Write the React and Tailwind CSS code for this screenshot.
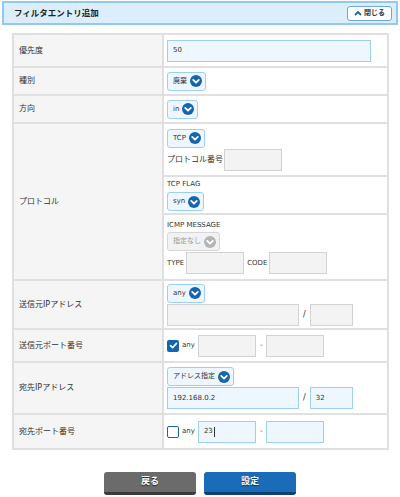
import React from 'react';

const font = { fontFamily: '"DejaVu Sans", "Noto Sans CJK JP", sans-serif' };

const Chevron = ({ gray }) => (
  <svg width="12" height="12" viewBox="0 0 12 12" className="shrink-0">
    <circle cx="6" cy="6" r="6" fill={gray ? '#b5b5b5' : '#1565b0'} />
    <path d="M3.2 4.9 L6 7.7 L8.8 4.9" fill="none" stroke="#fff" strokeWidth="1.8" strokeLinecap="round" strokeLinejoin="round" />
  </svg>
);

const Select = ({ label, gray }) => (
  <div className="flex">
    <div
      className={
        'flex h-[19px] items-center gap-[3px] rounded-[3px] border pl-[5px] pr-[3px] text-[7px] ' +
        (gray ? 'border-[#d6d6d6] bg-[#f2f2f2] text-[#9a9a9a]' : 'border-[#9ccff3] bg-[#eef7ff] text-[#333]')
      }
    >
      <span>{label}</span>
      <Chevron gray={gray} />
    </div>
  </div>
);

const Input = ({ w, value, blue, caret }) => (
  <div
    className={
      'flex h-[22px] shrink-0 items-center border px-[5px] text-[7px] text-[#333] ' +
      (blue ? 'border-[#9ccff3] bg-[#eef7fd]' : 'border-[#d2d2d2] bg-[#f3f3f3]')
    }
    style={{ width: w }}
  >
    {value}
    {caret && <span className="ml-[1px] inline-block h-[10px] w-px bg-[#333]" />}
  </div>
);

const Check = ({ checked }) =>
  checked ? (
    <div className="flex h-[12px] w-[12px] items-center justify-center rounded-[2px] bg-[#1565b0]">
      <svg width="9" height="9" viewBox="0 0 9 9">
        <path d="M1.5 4.6 L3.6 6.6 L7.5 2.4" fill="none" stroke="#fff" strokeWidth="1.6" strokeLinecap="round" strokeLinejoin="round" />
      </svg>
    </div>
  ) : (
    <div className="h-[12px] w-[12px] rounded-[2px] border border-[#1565b0] bg-white" />
  );

const Row = ({ label, h, children, last }) => (
  <div className={'flex ' + (last ? '' : 'border-b-2 border-[#e0e0e0]')} style={{ height: h }}>
    <div className="flex w-[150px] shrink-0 items-center border-r-2 border-[#e0e0e0] bg-[#f5f5f5] pl-[5px] text-[8px] text-[#333]">
      {label}
    </div>
    <div className="flex flex-1 flex-col justify-center pl-[3px]">{children}</div>
  </div>
);

export default function App() {
  return (
    <div className="h-[497px] w-[400px] bg-white pt-px text-[#333]" style={font}>
      <div className="mx-[2px] flex h-[24px] items-center justify-between border-2 border-[#93c9ef] bg-[#dceefc] pl-[10px] pr-[4px]">
        <span className="text-[8.5px] font-bold text-[#222]">フィルタエントリ追加</span>
        <div className="flex h-[15px] w-[45px] items-center justify-center gap-[2px] rounded-[3px] border border-[#6aa8dc] bg-white text-[7px] font-bold text-[#333]">
          <svg width="8" height="6" viewBox="0 0 8 6">
            <path d="M1 5 L4 2 L7 5" fill="none" stroke="#1565b0" strokeWidth="1.8" />
          </svg>
          閉じる
        </div>
      </div>

      <div className="ml-[12px] mt-[8px] w-[377px] border-2 border-[#e0e0e0]">
        <Row label="優先度" h={33}>
          <Input w={204} value="50" blue />
        </Row>
        <Row label="種別" h={28}>
          <Select label="廃棄" />
        </Row>
        <Row label="方向" h={28}>
          <Select label="in" />
        </Row>
        <div className="flex border-b-2 border-[#e0e0e0]" style={{ height: 157 }}>
          <div className="flex w-[150px] shrink-0 items-center border-r-2 border-[#e0e0e0] bg-[#f5f5f5] pl-[5px] text-[8px]">
            プロトコル
          </div>
          <div className="flex flex-1 flex-col">
            <div className="flex h-[53px] flex-col justify-center gap-[1px] border-b-2 border-[#e0e0e0] pl-[3px]">
              <Select label="TCP" />
              <div className="flex items-center gap-[1px] text-[8px]">
                <span>プロトコル番号</span>
                <Input w={58} />
              </div>
            </div>
            <div className="flex h-[38px] flex-col justify-center gap-[2px] border-b-2 border-[#e0e0e0] pl-[3px]">
              <span className="text-[7px] leading-[11px]">TCP FLAG</span>
              <Select label="syn" />
            </div>
            <div className="flex flex-1 flex-col justify-center gap-[1px] pl-[3px]">
              <span className="text-[7px] leading-[11px]">ICMP MESSAGE</span>
              <Select label="指定なし" gray />
              <div className="flex items-center gap-[2px] text-[7px]">
                <span>TYPE</span>
                <Input w={58} />
                <span className="ml-[1px]">CODE</span>
                <Input w={58} />
              </div>
            </div>
          </div>
        </div>
        <Row label="送信元IPアドレス" h={49}>
          <div className="flex flex-col gap-[1px]">
            <Select label="any" />
            <div className="flex items-center gap-[4px] text-[8px]">
              <Input w={132} />
              <span>/</span>
              <Input w={43} />
            </div>
          </div>
        </Row>
        <Row label="送信元ポート番号" h={33}>
          <div className="flex items-center text-[7px]">
            <Check checked />
            <span className="ml-[3px] mr-[3px]">any</span>
            <Input w={58} />
            <span className="mx-[4px]">-</span>
            <Input w={58} />
          </div>
        </Row>
        <Row label="宛先IPアドレス" h={52}>
          <div className="flex flex-col gap-[1px]">
            <Select label="アドレス指定" />
            <div className="flex items-center gap-[4px] text-[8px]">
              <Input w={132} value="192.168.0.2" blue />
              <span>/</span>
              <Input w={43} value="32" blue />
            </div>
          </div>
        </Row>
        <Row label="宛先ポート番号" h={33} last>
          <div className="flex items-center text-[7px]">
            <Check />
            <span className="ml-[3px] mr-[3px]">any</span>
            <Input w={58} value="23" blue caret />
            <span className="mx-[4px]">-</span>
            <Input w={58} blue />
          </div>
        </Row>
      </div>

      <div className="mt-[22px] flex justify-center gap-[8px]">
        <div className="flex h-[23px] w-[92px] items-center justify-center rounded-[3px] border-b-[3px] border-[#3b3b3b] bg-[#6b6b6b] text-[9px] font-bold text-white [text-shadow:0_1px_1px_#222]">
          戻る
        </div>
        <div className="flex h-[23px] w-[92px] items-center justify-center rounded-[3px] border-b-[3px] border-[#0d3f73] bg-[#1a6cb8] text-[9px] font-bold text-white [text-shadow:0_1px_1px_#0a2f55]">
          設定
        </div>
      </div>
    </div>
  );
}
